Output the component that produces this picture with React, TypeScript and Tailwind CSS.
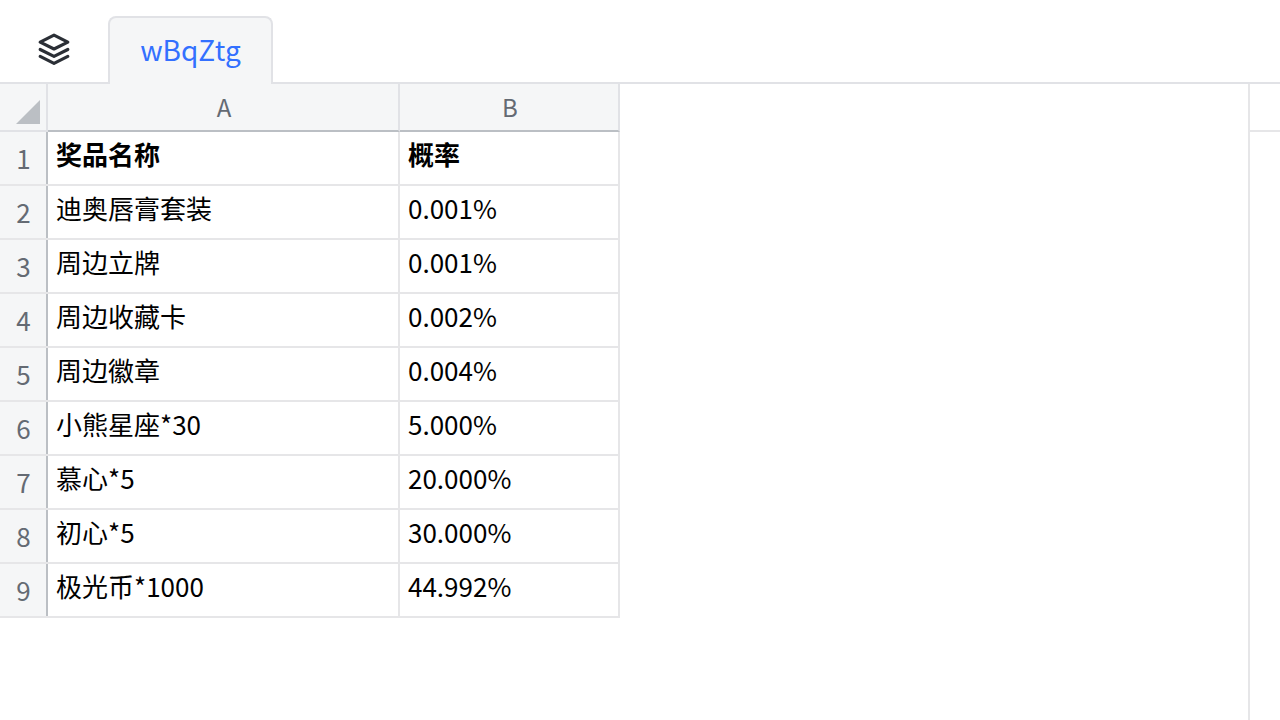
const rows = [
  ['奖品名称', '概率'],
  ['迪奥唇膏套装', '0.001%'],
  ['周边立牌', '0.001%'],
  ['周边收藏卡', '0.002%'],
  ['周边徽章', '0.004%'],
  ['小熊星座*30', '5.000%'],
  ['慕心*5', '20.000%'],
  ['初心*5', '30.000%'],
  ['极光币*1000', '44.992%'],
]

function LayersIcon() {
  return (
    <svg width="34" height="34" viewBox="0 0 32 32" fill="none" stroke="#2b2f36" strokeWidth="3" strokeLinejoin="round" strokeLinecap="round">
      <path d="M16 3 L29 9.5 L16 16 L3 9.5 Z" />
      <path d="M3 16.5 L16 23 L29 16.5" />
      <path d="M3 23 L16 29.5 L29 23" />
    </svg>
  )
}

export default function App() {
  return (
    <div className="h-[720px] w-[1280px] overflow-hidden bg-white flex flex-col font-['Noto_Sans_CJK_SC',sans-serif] text-[26px] text-black">
      {/* Tabs */}
      <div className="h-[84px] shrink-0 flex items-end border-b-2 border-[#e1e2e6]">
        <div className="w-[108px] h-full flex items-center justify-center pt-[16px]">
          <LayersIcon />
        </div>
        <div className="w-[165px] h-[68px] -mb-[2px] rounded-t-[8px] border-2 border-b-0 border-[#e1e2e6] bg-[#f5f6f7] flex items-center justify-center text-[28px] text-[#3370ff] pb-[5px]">
          wBqZtg
        </div>
      </div>

      <div className="flex flex-1 min-h-0">
        {/* Sheet */}
        <div className="w-[620px] shrink-0">
          <div className="flex h-[48px] bg-[#f5f6f7] text-[#646a73] text-[24px]">
            <div className="w-[48px] shrink-0 border-r-2 border-b-2 border-[#e1e2e6] flex items-end justify-end pr-[6px] pb-[6px]">
              <div className="w-[24px] h-[24px] bg-[#bbbfc4] [clip-path:polygon(100%_0,100%_100%,0_100%)]" />
            </div>
            <div className="w-[352px] shrink-0 border-r-2 border-[#e1e2e6] border-b-2 border-b-[#bbbfc4] flex items-center justify-center pl-[2px]">A</div>
            <div className="w-[220px] shrink-0 border-r-2 border-[#e1e2e6] border-b-2 border-b-[#bbbfc4] flex items-center justify-center pl-[2px]">B</div>
          </div>
          {rows.map((row, i) => (
            <div key={i} className="flex h-[54px] border-b-2 border-[#e6e6e8]">
              <div className="w-[48px] shrink-0 bg-[#f5f6f7] border-r-2 border-[#bbbfc4] flex items-center justify-center text-[#646a73] pl-[1px] pb-[1px]">
                {i + 1}
              </div>
              <div className={`w-[352px] shrink-0 border-r-2 border-[#e6e6e8] pl-[8px] flex items-center pb-[10px] ${i === 0 ? 'font-bold' : ''}`}>
                {row[0]}
              </div>
              <div className={`w-[220px] shrink-0 border-r-2 border-[#e6e6e8] pl-[8px] flex items-center pb-[10px] ${i === 0 ? 'font-bold' : ''}`}>
                {row[1]}
              </div>
            </div>
          ))}
        </div>

        {/* Right side */}
        <div className="flex-1 flex justify-end">
          <div className="w-[32px] border-l-2 border-[#e6e6e8]">
            <div className="h-[48px] border-b-2 border-[#e6e6e8]" />
          </div>
        </div>
      </div>
    </div>
  )
}
